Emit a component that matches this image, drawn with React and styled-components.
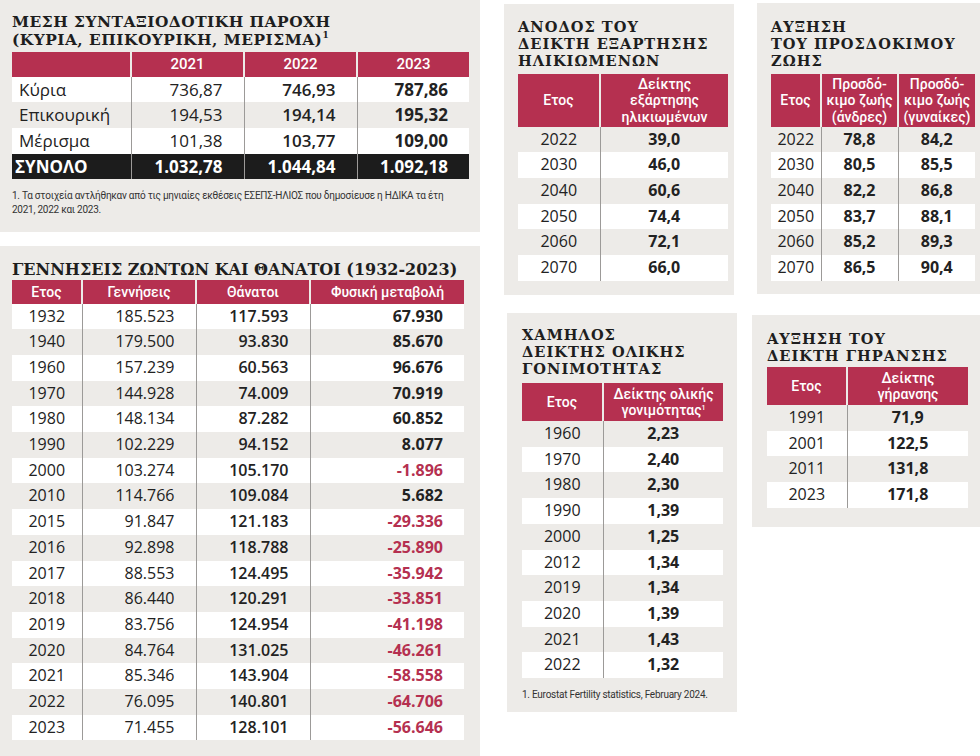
import React from 'react';
import styled, { createGlobalStyle } from 'styled-components';

const GlobalStyle = createGlobalStyle`
  html, body {
    margin: 0;
    padding: 0;
    background: #fff;
  }
  body {
    width: 980px;
    height: 756px;
    overflow: hidden;
    font-family: "Open Sans", "Noto Sans", sans-serif;
    color: #222;
  }
`;

const Page = styled.div`
  display: grid;
  grid-template-columns: 480px 265px 235px;
  align-items: start;
`;

const Column = styled.div`
  display: flex;
  flex-direction: column;
`;

const Panel = styled.section`
  background: #edebe8;
  box-sizing: border-box;
  margin-top: ${p => p.$top || 0}px;
  margin-left: ${p => p.$left || 0}px;
  width: ${p => p.$width}px;
  height: ${p => p.$height}px;
  padding: ${p => p.$padTop}px 0 0 ${p => p.$padLeft}px;
`;

const Title = styled.h2`
  margin: 0 0 ${p => p.$gap || 3}px;
  font-family: "DejaVu Serif", "Liberation Serif", serif;
  font-weight: bold;
  font-size: ${p => p.$size || 14.6}px;
  letter-spacing: ${p => p.$spacing ?? 1}px;
  line-height: ${p => p.$lh || 17}px;
  color: #1e1e1e;

  sup {
    font-size: 9px;
    line-height: 0;
    vertical-align: 7px;
  }
`;

const Table = styled.table`
  width: ${p => p.$width}px;
  border-collapse: collapse;
  table-layout: fixed;
  font-size: ${p => p.$size || 16}px;

  th {
    background: #b53050;
    color: #fff;
    font-family: Roboto, "Open Sans", sans-serif;
    font-weight: 500;
    font-size: ${p => p.$headSize || 14}px;
    line-height: 16.5px;
    padding: ${p => p.$headPad || 4}px 2px;
    text-align: center;
    border-left: 2px solid #edebe8;
  }
  th:first-child {
    border-left: none;
  }
  td {
    height: 25.7px;
    padding: 0;
    line-height: 25.7px;
    text-align: center;
    border-left: 1px solid #9c9a98;
    white-space: nowrap;
  }
  td:first-child {
    border-left: none;
  }
  tbody tr:nth-child(${p => (p.$whiteFirst ? 'odd' : 'even')}) td {
    background: #fff;
  }
`;

const Cell = styled.td`
  && {
    text-align: ${p => p.$align || 'center'};
    padding-right: ${p => (p.$align === 'right' ? 21 : 0)}px;
    padding-left: ${p => (p.$align === 'left' ? p.$padLeft || 7 : 0)}px;
    font-weight: ${p => p.$weight || 400};
    color: ${p => (p.$negative ? '#b53050' : 'inherit')};
  }
`;

const TotalRow = styled.tr`
  && td {
    background: #1c1c1c;
    color: #fff;
    font-weight: 700;
    border-left: 1px solid #9c9a98;
  }
  && td:first-child {
    border-left: none;
  }
`;

const Footnote = styled.p`
  margin: ${p => p.$top || 10}px 0 0;
  font-family: Roboto, "Liberation Sans", sans-serif;
  font-size: 10px;
  line-height: 14px;
  letter-spacing: -0.25px;
  color: #333;
  width: ${p => p.$width || 440}px;
`;

const Sup = styled.sup`
  font-size: 7px;
  line-height: 0;
  vertical-align: 5px;
`;

const pensions = [
  ['Κύρια', '736,87', '746,93', '787,86'],
  ['Επικουρική', '194,53', '194,14', '195,32'],
  ['Μέρισμα', '101,38', '103,77', '109,00'],
];

const births = [
  ['1932', '185.523', '117.593', '67.930'],
  ['1940', '179.500', '93.830', '85.670'],
  ['1960', '157.239', '60.563', '96.676'],
  ['1970', '144.928', '74.009', '70.919'],
  ['1980', '148.134', '87.282', '60.852'],
  ['1990', '102.229', '94.152', '8.077'],
  ['2000', '103.274', '105.170', '-1.896'],
  ['2010', '114.766', '109.084', '5.682'],
  ['2015', '91.847', '121.183', '-29.336'],
  ['2016', '92.898', '118.788', '-25.890'],
  ['2017', '88.553', '124.495', '-35.942'],
  ['2018', '86.440', '120.291', '-33.851'],
  ['2019', '83.756', '124.954', '-41.198'],
  ['2020', '84.764', '131.025', '-46.261'],
  ['2021', '85.346', '143.904', '-58.558'],
  ['2022', '76.095', '140.801', '-64.706'],
  ['2023', '71.455', '128.101', '-56.646'],
];

const dependency = [
  ['2022', '39,0'], ['2030', '46,0'], ['2040', '60,6'],
  ['2050', '74,4'], ['2060', '72,1'], ['2070', '66,0'],
];

const lifeExpectancy = [
  ['2022', '78,8', '84,2'], ['2030', '80,5', '85,5'], ['2040', '82,2', '86,8'],
  ['2050', '83,7', '88,1'], ['2060', '85,2', '89,3'], ['2070', '86,5', '90,4'],
];

const fertility = [
  ['1960', '2,23'], ['1970', '2,40'], ['1980', '2,30'], ['1990', '1,39'],
  ['2000', '1,25'], ['2012', '1,34'], ['2019', '1,34'], ['2020', '1,39'],
  ['2021', '1,43'], ['2022', '1,32'],
];

const ageing = [['1991', '71,9'], ['2001', '122,5'], ['2011', '131,8'], ['2023', '171,8']];

const Cols = ({ widths }) => (
  <colgroup>
    {widths.map((w, i) => <col key={i} style={{ width: w }} />)}
  </colgroup>
);

const YearTable = ({ width, widths, heads, rows, headPad }) => (
  <Table $width={width} $headPad={headPad}>
    <Cols widths={widths} />
    <thead>
      <tr>
        {heads.map((h, i) => <th key={i}>{h}</th>)}
      </tr>
    </thead>
    <tbody>
      {rows.map(([year, ...vals]) => (
        <tr key={year}>
          <Cell>{year}</Cell>
          {vals.map((v, i) => <Cell key={i} $weight={700}>{v}</Cell>)}
        </tr>
      ))}
    </tbody>
  </Table>
);

export default function App() {
  return (
    <>
      <GlobalStyle />
      <Page>
        <Column>
          <Panel $width={480} $height={232} $padTop={13} $padLeft={12}>
            <Title $lh={18} $size={15.4} $spacing={0.5} $gap={3}>
              ΜΕΣΗ ΣΥΝΤΑΞΙΟΔΟΤΙΚΗ ΠΑΡΟΧΗ<br />
              (ΚΥΡΙΑ, ΕΠΙΚΟΥΡΙΚΗ, ΜΕΡΙΣΜΑ)<sup>1</sup>
            </Title>
            <Table $width={457} $whiteFirst $headPad={4} $size={17} $headSize={15}>
              <Cols widths={[119, 113, 113, 112]} />
              <thead>
                <tr>
                  <th></th>
                  <th>2021</th>
                  <th>2022</th>
                  <th>2023</th>
                </tr>
              </thead>
              <tbody>
                {pensions.map(([label, a, b, c]) => (
                  <tr key={label}>
                    <Cell $align="left">{label}</Cell>
                    <Cell $align="right">{a}</Cell>
                    <Cell $align="right" $weight={600}>{b}</Cell>
                    <Cell $align="right" $weight={700}>{c}</Cell>
                  </tr>
                ))}
                <TotalRow>
                  <Cell $align="left" $padLeft={3} $weight={700}>ΣΥΝΟΛΟ</Cell>
                  <Cell $align="right" $weight={700}>1.032,78</Cell>
                  <Cell $align="right" $weight={700}>1.044,84</Cell>
                  <Cell $align="right" $weight={700}>1.092,18</Cell>
                </TotalRow>
              </tbody>
            </Table>
            <Footnote $top={10}>
              1. Τα στοιχεία αντλήθηκαν από τις μηνιαίες εκθέσεις ΕΣΕΠΣ-ΗΛΙΟΣ που δημοσίευσε η ΗΔΙΚΑ τα έτη
              2021, 2022 και 2023.
            </Footnote>
          </Panel>

          <Panel $top={14} $width={480} $height={520} $padTop={15} $padLeft={12}>
            <Title $lh={18} $size={16} $spacing={0} $gap={1}>ΓΕΝΝΗΣΕΙΣ ΖΩΝΤΩΝ ΚΑΙ ΘΑΝΑΤΟΙ (1932-2023)</Title>
            <Table $width={452} $whiteFirst $headPad={3.5}>
              <Cols widths={[70, 114, 114, 154]} />
              <thead>
                <tr>
                  <th>Ετος</th>
                  <th>Γεννήσεις</th>
                  <th>Θάνατοι</th>
                  <th>Φυσική μεταβολή</th>
                </tr>
              </thead>
              <tbody>
                {births.map(([year, b, d, n]) => (
                  <tr key={year}>
                    <Cell>{year}</Cell>
                    <Cell $align="right">{b}</Cell>
                    <Cell $align="right" $weight={600}>{d}</Cell>
                    <Cell $align="right" $weight={700} $negative={n.startsWith('-')}>{n}</Cell>
                  </tr>
                ))}
              </tbody>
            </Table>
          </Panel>
        </Column>

        <Column>
          <Panel $top={4} $left={24} $width={230} $height={291} $padTop={14} $padLeft={14}>
            <Title $gap={5}>
              ΑΝΟΔΟΣ ΤΟΥ<br />ΔΕΙΚΤΗ ΕΞΑΡΤΗΣΗΣ<br />ΗΛΙΚΙΩΜΕΝΩΝ
            </Title>
            <YearTable
              width={210}
              widths={[82, 128]}
              heads={['Ετος', <>Δείκτης<br />εξάρτησης<br />ηλικιωμένων</>]}
              rows={dependency}
              headPad={1.5}
            />
          </Panel>

          <Panel $top={18} $left={27} $width={230} $height={399} $padTop={13} $padLeft={15}>
            <Title $gap={6}>
              ΧΑΜΗΛΟΣ<br />ΔΕΙΚΤΗΣ ΟΛΙΚΗΣ<br />ΓΟΝΙΜΟΤΗΤΑΣ
            </Title>
            <YearTable
              width={201}
              widths={[81, 120]}
              heads={['Ετος', <>Δείκτης ολικής<br />γονιμότητας<Sup>1</Sup></>]}
              rows={fertility}
              headPad={2.5}
            />
            <Footnote $top={10} $width={210}>1. Eurostat Fertility statistics, February 2024.</Footnote>
          </Panel>
        </Column>

        <Column>
          <Panel $top={3} $left={12} $width={223} $height={291} $padTop={15} $padLeft={14}>
            <Title $gap={5}>
              ΑΥΞΗΣΗ<br />ΤΟΥ ΠΡΟΣΔΟΚΙΜΟΥ<br />ΖΩΗΣ
            </Title>
            <YearTable
              width={204}
              widths={[50, 77, 77]}
              heads={[
                'Ετος',
                <>Προσδό-<br />κιμο ζωής<br />(άνδρες)</>,
                <>Προσδό-<br />κιμο ζωής<br />(γυναίκες)</>,
              ]}
              rows={lifeExpectancy}
              headPad={1.5}
            />
          </Panel>

          <Panel $top={21} $left={7} $width={228} $height={212} $padTop={15} $padLeft={15}>
            <Title $gap={3}>
              ΑΥΞΗΣΗ ΤΟΥ<br />ΔΕΙΚΤΗ ΓΗΡΑΝΣΗΣ
            </Title>
            <YearTable
              width={201}
              widths={[80, 121]}
              heads={['Ετος', <>Δείκτης<br />γήρανσης</>]}
              rows={ageing}
              headPad={2.5}
            />
          </Panel>
        </Column>
      </Page>
    </>
  );
}
